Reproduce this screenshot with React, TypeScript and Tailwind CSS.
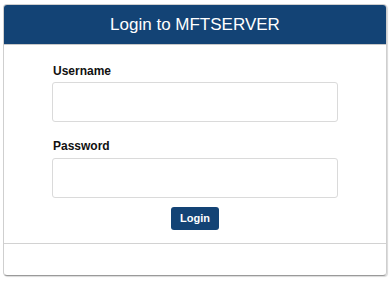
export default function App() {
  return (
    <div className="w-[392px] h-[283px] bg-white pt-1 px-[3px] font-['Liberation_Sans',Arial,sans-serif]">
      <div className="w-[384px] h-[272px] flex flex-col rounded-[4px] border border-[#cfcfcf] border-b-[#9a9a9a] shadow-[1px_1px_1px_rgba(0,0,0,0.15)] overflow-hidden">
        <div className="h-[40px] shrink-0 bg-[#134375] border-b border-[#c8c8c8] flex items-center justify-center">
          <h1 className="text-[17px] text-white leading-none">Login to MFTSERVER</h1>
        </div>

        <div className="flex flex-col px-12 pt-[19px] h-[199px] shrink-0 border-b border-[#d2d2d2]">
          <label className="text-[12px] font-bold text-[#111] pl-px leading-[14px]">Username</label>
          <input className="mt-[4px] h-[40px] w-full rounded-[3px] border border-[#dadada] bg-white outline-none" />

          <label className="mt-[17px] text-[12px] font-bold text-[#111] pl-px leading-[14px]">Password</label>
          <input type="password" className="mt-[5px] h-[40px] w-full rounded-[3px] border border-[#dadada] bg-white outline-none" />

          <div className="flex justify-center mt-[9px]">
            <button className="h-[23px] w-[48px] rounded-[3px] bg-[#134375] text-white text-[11px] font-bold">Login</button>
          </div>
        </div>

        <div className="flex-1" />
      </div>
    </div>
  );
}
